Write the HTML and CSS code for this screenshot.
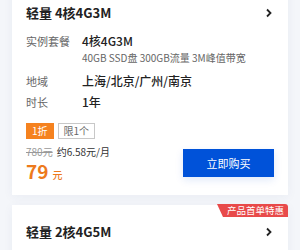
FILE: index.html
```html
<!DOCTYPE html>
<html lang="zh">
<head>
<meta charset="utf-8">
<link rel="stylesheet" href="styles.css">
</head>
<body>
<div class="list">
  <div class="card">
    <div class="card-head">
      <span class="title">轻量 4核4G3M</span>
      <svg class="chev" width="8" height="10" viewBox="0 0 8 10"><path d="M2 1.5 L5.5 5 L2 8.5" fill="none" stroke="#222" stroke-width="1.8"/></svg>
    </div>
    <div class="spec">
      <div class="row"><span class="label">实例套餐</span><span class="value">4核4G3M</span></div>
      <div class="sub">40GB SSD盘 300GB流量 3M峰值带宽</div>
      <div class="row"><span class="label">地域</span><span class="value">上海/北京/广州/南京</span></div>
      <div class="row"><span class="label">时长</span><span class="value">1年</span></div>
    </div>
    <div class="tags">
      <span class="tag tag-discount">1折</span>
      <span class="tag tag-limit">限1个</span>
    </div>
    <div class="buy">
      <div class="price">
        <div class="price-line"><span class="orig">780元</span><span class="monthly">约6.58元/月</span></div>
        <div class="now"><span class="num">79</span><span class="unit">元</span></div>
      </div>
      <button class="btn">立即购买</button>
    </div>
  </div>
  <div class="card card-second">
    <span class="badge">产品首单特惠</span>
    <div class="card-head">
      <span class="title">轻量 2核4G5M</span>
      <svg class="chev" width="8" height="10" viewBox="0 0 8 10"><path d="M2 1.5 L5.5 5 L2 8.5" fill="none" stroke="#222" stroke-width="1.8"/></svg>
    </div>
  </div>
</div>
</body>
</html>
```
FILE: styles.css
```css
* { box-sizing: border-box; }
html, body {
  margin: 0;
  padding: 0;
  background: #f4f6fa;
  width: 300px;
  height: 250px;
  overflow: hidden;
  font-family: "Noto Sans CJK SC", "Noto Sans", sans-serif;
  color: #222;
}
.list {
  margin-top: -14px;
  padding: 0 12px;
  display: flex;
  flex-direction: column;
  gap: 10px;
}
.card {
  position: relative;
  background: #fff;
  padding: 17px 14px 13px 14px;
  box-shadow: 0 2px 10px rgba(40, 60, 120, 0.05);
}
.card-head {
  display: flex;
  justify-content: space-between;
  align-items: center;
  height: 20px;
}
.title {
  font-size: 13px;
  font-weight: 700;
  line-height: 20px;
  color: #222;
}
.chev { margin-right: 1px; }
.spec {
  margin-top: 7px;
}
.row {
  display: flex;
  align-items: baseline;
  height: 21px;
  line-height: 21px;
}
.label {
  width: 56px;
  flex: none;
  font-size: 11px;
  color: #666;
}
.value {
  font-size: 12px;
  color: #222;
  font-weight: 500;
}
.sub {
  padding-left: 56px;
  font-size: 10px;
  line-height: 13px;
  height: 13px;
  color: #666;
  margin-bottom: 6px;
}
.tags {
  margin-top: 11px;
  display: flex;
  gap: 4px;
}
.tag {
  font-size: 10px;
  line-height: 14px;
  height: 16px;
  padding: 0 5px;
  border: 1px solid transparent;
}
.tag-discount {
  background: #f5821f;
  border-color: #f5821f;
  color: #fff;
}
.tag-limit {
  border-color: #c8c8c8;
  color: #666;
}
.buy {
  margin-top: 5px;
  display: flex;
  justify-content: space-between;
  align-items: center;
}
.price-line {
  font-size: 10px;
  line-height: 16px;
  height: 16px;
  display: flex;
  gap: 4px;
}
.orig {
  color: #999;
  text-decoration: line-through;
}
.monthly { color: #333; }
.now {
  color: #ed7a1c;
  display: flex;
  align-items: flex-end;
  gap: 4px;
  height: 22px;
}
.num {
  font-size: 19px;
  font-weight: 700;
  line-height: 22px;
}
.unit {
  font-size: 10px;
  font-weight: 500;
  line-height: 14px;
}
.btn {
  width: 91px;
  height: 28px;
  border: none;
  background: #0052d9;
  color: #fff;
  font-family: inherit;
  font-size: 11px;
  padding: 0;
  box-shadow: 0 3px 8px rgba(0, 82, 217, 0.12);
}
.card-second {
  height: 60px;
}
.badge {
  position: absolute;
  top: -1px;
  right: 0;
  height: 13px;
  padding: 0 4px 0 10px;
  font-size: 9.5px;
  line-height: 13px;
  color: #fff;
  background: #e84a4a;
  border-top-right-radius: 3px;
  clip-path: polygon(0 0, 100% 0, 100% 100%, 6px 100%);
}
```
